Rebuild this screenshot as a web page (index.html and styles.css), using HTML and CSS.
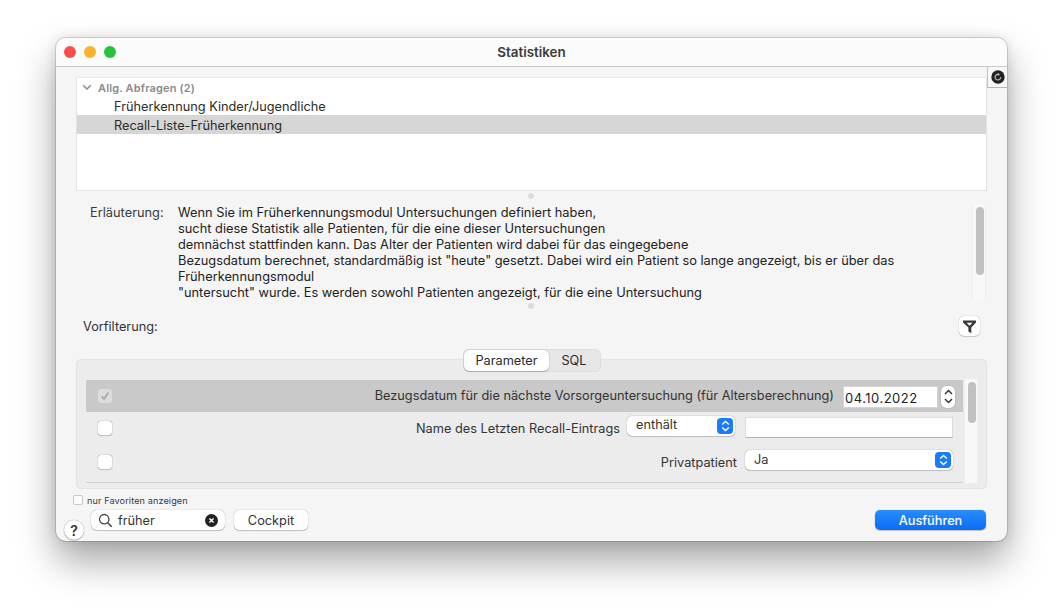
FILE: index.html
```html
<!DOCTYPE html>
<html lang="de">
<head>
<meta charset="utf-8">
<title>Statistiken</title>
<link rel="stylesheet" href="styles.css">
</head>
<body>
<div class="window">
  <header class="titlebar">
    <div class="lights"><i class="light red"></i><i class="light yellow"></i><i class="light green"></i></div>
    <div class="title">Statistiken</div>
  </header>
  <button class="refresh" aria-label="Aktualisieren">
    <svg width="14" height="14" viewBox="0 0 14 14"><circle cx="7" cy="7" r="6.7" fill="#222"/><path d="M9.7 7.2A2.8 2.8 0 1 1 7 4.4" fill="none" stroke="#bdbdbd" stroke-width="1.2"/><path d="M6.8 2.7 9 4.4 6.8 6Z" fill="#bdbdbd"/></svg>
  </button>

  <section class="list">
    <div class="group"><svg class="chev" width="10" height="7" viewBox="0 0 10 7"><path d="M1.2 1.2 5 5l3.8-3.8" fill="none" stroke="#8a8a8a" stroke-width="1.5"/></svg>Allg. Abfragen (2)</div>
    <div class="item">Früherkennung Kinder/Jugendliche</div>
    <div class="item selected">Recall-Liste-Früherkennung</div>
  </section>
  <div class="dot dot-a"></div>

  <section class="explain">
    <div class="explain-label">Erläuterung:</div>
    <div class="explain-text">
      Wenn Sie im Früherkennungsmodul Untersuchungen definiert haben,<br>
      sucht diese Statistik alle Patienten, für die eine dieser Untersuchungen<br>
      demnächst stattfinden kann. Das Alter der Patienten wird dabei für das eingegebene<br>
      Bezugsdatum berechnet, standardmäßig ist "heute" gesetzt. Dabei wird ein Patient so lange angezeigt, bis er über das<br>
      Früherkennungsmodul<br>
      "untersucht" wurde. Es werden sowohl Patienten angezeigt, für die eine Untersuchung
    </div>
    <div class="vscroll explain-scroll"><div class="thumb explain-thumb"></div></div>
  </section>
  <div class="dot dot-b"></div>

  <section class="prefilter">
    <span>Vorfilterung:</span>
    <button class="filter-btn" aria-label="Filter">
      <svg width="15" height="15" viewBox="0 0 15 15"><path d="M1 1.5h13v2L9.3 8.4v5.8L6.4 12.4V8.4L1 3.5Z" fill="#3a3a3a"/><path d="M4.6 3.7h5.8L7.5 6.7Z" fill="#fff"/></svg>
    </button>
  </section>

  <section class="panel">
    <div class="tabs"><span class="tab active">Parameter</span><span class="tab">SQL</span></div>
    <div class="panel-body">
      <div class="rows">
        <div class="row row-a selected-row">
          <span class="check checked"><svg width="10" height="10" viewBox="0 0 10 10"><path d="M1.6 5.2 4 8l4.4-6.4" fill="none" stroke="#a9a9a9" stroke-width="1.8"/></svg></span>
          <span class="label">Bezugsdatum für die nächste Vorsorgeuntersuchung (für Altersberechnung)</span>
          <span class="date">04.10.2022</span>
          <span class="stepper">
            <svg width="9" height="6" viewBox="0 0 9 6"><path d="M1 5 4.5 1.4 8 5" fill="none" stroke="#333" stroke-width="1.4"/></svg>
            <svg width="9" height="6" viewBox="0 0 9 6"><path d="M1 1 4.5 4.6 8 1" fill="none" stroke="#333" stroke-width="1.4"/></svg>
          </span>
        </div>
        <div class="row row-b">
          <span class="check"></span>
          <span class="label">Name des Letzten Recall-Eintrags</span>
          <span class="select select-small">enthält<span class="select-arrow"><svg width="9" height="12" viewBox="0 0 9 12"><path d="M1.2 4.4 4.5 1.4l3.3 3M1.2 7.6l3.3 3 3.3-3" fill="none" stroke="#fff" stroke-width="1.4"/></svg></span></span>
          <span class="input"></span>
        </div>
        <div class="row row-c">
          <span class="check"></span>
          <span class="label">Privatpatient</span>
          <span class="select select-wide">Ja<span class="select-arrow"><svg width="9" height="12" viewBox="0 0 9 12"><path d="M1.2 4.4 4.5 1.4l3.3 3M1.2 7.6l3.3 3 3.3-3" fill="none" stroke="#fff" stroke-width="1.4"/></svg></span></span>
        </div>
      </div>
      <div class="vscroll panel-scroll"><div class="thumb panel-thumb"></div></div>
    </div>
  </section>

  <div class="favorites"><span class="fav-check"></span>nur Favoriten anzeigen</div>

  <footer class="footer">
    <div class="search">
      <svg width="15" height="15" viewBox="0 0 15 15"><circle cx="6.2" cy="6.2" r="4.7" fill="none" stroke="#444" stroke-width="1.3"/><path d="m9.7 9.7 4 4" stroke="#444" stroke-width="1.6"/></svg>
      <span class="search-text">früher</span>
      <svg class="clear" width="13" height="13" viewBox="0 0 13 13"><circle cx="6.5" cy="6.5" r="6.5" fill="#222"/><path d="m4.4 4.4 4.2 4.2m0-4.2-4.2 4.2" stroke="#fff" stroke-width="1.4"/></svg>
    </div>
    <button class="btn">Cockpit</button>
    <button class="btn primary">Ausführen</button>
  </footer>
  <button class="help">?</button>
</div>
</body>
</html>
```
FILE: styles.css
```css
* { box-sizing: border-box; }
html, body { margin: 0; height: 100%; background: #fff; overflow: hidden; }
body { padding: 38px 0 0 56px; font-family: Inter, "Liberation Sans", sans-serif; font-size: 12.75px; color: #2b2b2b; }
button { font: inherit; color: inherit; padding: 0; margin: 0; border: 0; background: none; }

.window {
  position: relative;
  width: 951px;
  height: 503px;
  background: #f5f5f5;
  border-radius: 10px;
  box-shadow: 0 0 0 1px rgba(0,0,0,.12), 0 20px 38px rgba(0,0,0,.36), 0 0 12px rgba(0,0,0,.12);
}

.titlebar {
  position: relative;
  height: 29px;
  background: #fbfbfb;
  border-bottom: 1px solid #c8c8c8;
  border-radius: 10px 10px 0 0;
  display: flex;
  align-items: center;
  justify-content: center;
}
.lights { position: absolute; left: 8px; top: 8px; display: flex; gap: 8px; }
.light { display: block; width: 12px; height: 12px; border-radius: 50%; }
.red { background: #fc4f4b; }
.yellow { background: #fdb22b; }
.green { background: #27c33f; }
.title { font-weight: 600; font-size: 13.4px; color: #3a3a3a; margin-top: -1px; }

.refresh {
  position: absolute;
  right: 0;
  top: 29px;
  width: 20px;
  height: 21px;
  background: #f7f7f7;
  border-left: 1px solid #c4c4c4;
  border-bottom: 1px solid #b4b4b4;
  display: flex;
  align-items: center;
  justify-content: center;
}

.list {
  width: 911px;
  height: 114px;
  margin: 10px 0 0 20px;
  background: #fff;
  border: 1px solid #e2e2e2;
  border-top: 1px solid #ececec;
}
.group { height: 18px; padding: 1px 0 0 5px; display: flex; align-items: center; gap: 6px; font-size: 11px; font-weight: 600; color: #8a8a8a; letter-spacing: .15px; }
.item { height: 19px; line-height: 21px; padding-left: 37px; }
.item.selected { background: #d6d6d6; }

.dot { width: 6px; height: 6px; margin-left: 472px; border-radius: 50%; background: #dcdcdc; }
.dot-a { margin-top: 2px; }
.dot-b { margin-top: 1px; }

.explain { position: relative; height: 98px; margin-top: 5px; padding-left: 34px; display: flex; font-size: 12.82px; line-height: 16px; }
.explain-label { width: 88px; padding-top: 1px; color: #3a3a3a; }
.explain-text { padding-top: 1px; color: #222; white-space: nowrap; }
.vscroll { background: #f8f8f8; border-left: 1px solid #ededed; border-right: 1px solid #ededed; flex: none; }
.explain-scroll { position: absolute; left: 916px; top: 0; width: 14px; height: 97px; padding: 3px 2px 0 3px; }
.thumb { width: 8px; background: #c1c1c1; border-radius: 4px; }
.explain-thumb { height: 68px; }

.prefilter { height: 20px; margin-top: 7px; display: flex; align-items: center; justify-content: space-between; padding: 0 27px 0 27px; }
.prefilter span { color: #333; }
.filter-btn { width: 21px; height: 20px; background: #fff; border-radius: 5px; box-shadow: 0 0 1px rgba(0,0,0,.4), 0 1px 1px rgba(0,0,0,.15); display: flex; align-items: center; justify-content: center; }

.panel {
  position: relative;
  width: 911px;
  height: 130px;
  margin: 23px 0 0 20px;
  background: #ececec;
  border: 1px solid #e3e3e3;
  border-radius: 5px;
}
.tabs {
  position: absolute;
  left: 386px;
  top: -11px;
  width: 138px;
  height: 23px;
  background: #e6e6e6;
  border: 1px solid #dedede;
  border-radius: 6px;
  display: flex;
  align-items: center;
}
.tab { text-align: center; width: 50px; color: #2b2b2b; }
.tab.active { width: 85px; height: 21px; line-height: 21px; background: #fff; border-radius: 5px; box-shadow: 0 0 1px rgba(0,0,0,.45), 0 1px 1px rgba(0,0,0,.2); }

.panel-body { display: flex; padding: 20px 8px 0 9px; height: 125px; }
.rows { width: 877px; height: 103px; border-bottom: 1px solid #cfcfcf; }
.row { display: flex; align-items: center; padding: 0 10px 0 12px; }
.row-a { height: 32px; background: #c9c9c9; padding-right: 8px; }
.row-b { height: 34px; }
.row-c { height: 34px; }
.check { width: 14px; height: 14px; flex: none; background: #fff; border-radius: 3px; box-shadow: 0 0 1px rgba(0,0,0,.6), 0 .5px 1px rgba(0,0,0,.15); display: flex; align-items: center; justify-content: center; }
.row-b .check, .row-c .check { margin-top: -2px; }
.check.checked { background: #dcdcdc; box-shadow: none; }
.label { flex: 1; margin-top: -2px; text-align: right; color: #333; white-space: nowrap; }
.row-a .label { padding-right: 9px; }
.row-b .label { padding-right: 7px; }
.row-c .label { padding-right: 8px; }
.date { width: 95px; height: 22px; margin-top: 1px; line-height: 22px; padding-left: 1px; background: #fff; border: 1px solid #d4d4d4; font-size: 13px; letter-spacing: .5px; color: #222; }
.stepper { width: 14px; height: 22px; margin-top: 1px; margin-left: 3px; background: #fff; border-radius: 5px; box-shadow: 0 0 1px rgba(0,0,0,.5); display: flex; flex-direction: column; align-items: center; justify-content: space-around; padding: 2px 0; }
.select { position: relative; height: 20px; line-height: 18px; background: #fff; border-radius: 5px; box-shadow: 0 0 1px rgba(0,0,0,.5), 0 1px 1px rgba(0,0,0,.15); padding-left: 9px; color: #333; }
.select-small { width: 108px; margin-right: 10px; margin-top: -7px; }
.select-wide { width: 208px; margin-top: -7px; line-height: 20px; }
.select-arrow { position: absolute; right: 2px; top: 2px; width: 16px; height: 16px; border-radius: 4px; background: #1a7cfa; display: flex; align-items: center; justify-content: center; }
.input { width: 208px; height: 21px; margin-top: -3px; background: #fff; border: 1px solid #dcdcdc; border-bottom-color: #b5b5b5; }
.panel-scroll { width: 14px; height: 104px; margin-top: -1px; padding: 3px 2px 0 3px; margin-left: 1px; }
.panel-thumb { height: 41px; }

.favorites { display: flex; align-items: center; gap: 4px; margin: 6px 0 0 17px; height: 10px; font-size: 9.15px; color: #3a3a3a; letter-spacing: .1px; }
.fav-check { width: 10px; height: 10px; background: #fbfbfb; border: 1px solid #c9c9c9; border-radius: 2px; }

.footer { display: flex; align-items: flex-start; height: 21px; margin-top: 5px; padding: 0 21px 0 35px; }
.search { width: 134px; height: 20px; background: #fff; border-radius: 6px; box-shadow: 0 0 1px rgba(0,0,0,.45), 0 1px 1px rgba(0,0,0,.18); display: flex; align-items: center; padding: 0 7px 0 7px; }
.search-text { flex: 1; padding-left: 5px; font-size: 12.75px; color: #333; }
.btn { width: 74px; height: 20px; margin-left: 9px; background: #fff; border-radius: 5px; box-shadow: 0 0 1px rgba(0,0,0,.45), 0 1px 1px rgba(0,0,0,.18); color: #333; font-size: 12.75px; }
.btn.primary { width: 111px; margin-left: auto; background: linear-gradient(#2a8cfc, #0a6cf5); color: #fff; font-weight: 500; }
.help { position: absolute; left: 8px; bottom: 1px; width: 20px; height: 20px; border-radius: 50%; background: #fff; box-shadow: 0 0 1px rgba(0,0,0,.5), 0 1px 1px rgba(0,0,0,.2); font-weight: 600; font-size: 14px; color: #333; }
```
